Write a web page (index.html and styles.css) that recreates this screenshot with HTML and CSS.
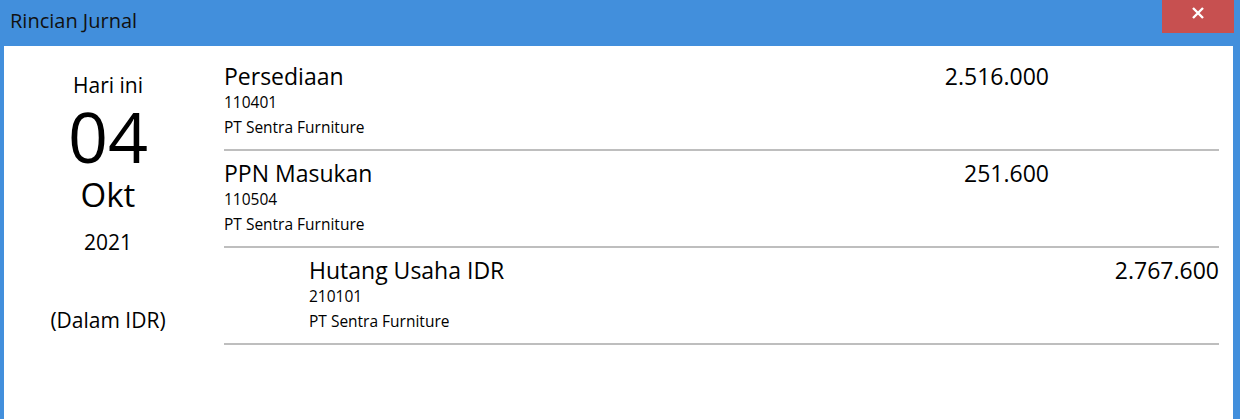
FILE: index.html
```html
<!DOCTYPE html>
<html lang="id">

<head>
    <meta charset="UTF-8">
    <meta name="viewport" content="width=device-width, initial-scale=1.0">
    <title>Rincian Jurnal</title>
    <link rel="stylesheet" href="styles.css">
</head>

<body>
    <div class="window">
        <div class="titlebar">
            <div class="title">Rincian Jurnal</div>
            <button class="close" title="Tutup">
                <svg width="12" height="12" viewBox="0 0 12 12">
                    <path d="M1 1 L11 11 M11 1 L1 11" stroke="#fff" stroke-width="2.4" fill="none" />
                </svg>
            </button>
        </div>

        <div class="content">
            <div class="date">
                <div class="today">Hari ini</div>
                <div class="day">04</div>
                <div class="month">Okt</div>
                <div class="year">2021</div>
                <div class="currency">(Dalam IDR)</div>
            </div>

            <div class="journal">
                <!-- Debit -->
                <div class="entry">
                    <div class="entry-body debit">
                        <div class="account">
                            <div class="name">Persediaan</div>
                            <div class="code">110401</div>
                            <div class="partner">PT Sentra Furniture</div>
                        </div>
                        <div class="amount">2.516.000</div>
                    </div>
                </div>
                <div class="entry">
                    <div class="entry-body debit">
                        <div class="account">
                            <div class="name">PPN Masukan</div>
                            <div class="code">110504</div>
                            <div class="partner">PT Sentra Furniture</div>
                        </div>
                        <div class="amount">251.600</div>
                    </div>
                </div>
                <!-- Kredit -->
                <div class="entry">
                    <div class="entry-body credit">
                        <div class="account">
                            <div class="name">Hutang Usaha IDR</div>
                            <div class="code">210101</div>
                            <div class="partner">PT Sentra Furniture</div>
                        </div>
                        <div class="amount">2.767.600</div>
                    </div>
                </div>
            </div>
        </div>
    </div>
</body>

</html>
```

FILE: styles.css
```css
body {
    margin: 0;
    font-family: "Open Sans", "Noto Sans", sans-serif;
    color: #000;
}

.window {
    height: 100vh;
    display: flex;
    flex-direction: column;
    background-color: #428fdc;
}

.titlebar {
    height: 46px;
    display: flex;
    justify-content: space-between;
    align-items: flex-start;
    padding: 0 6px 0 10px;
}

.title {
    font-size: 20px;
    line-height: 28px;
    padding-top: 7px;
    color: #111;
}

.close {
    width: 72px;
    height: 33px;
    border: none;
    padding: 0 0 8px;
    background-color: #c75050;
    display: flex;
    align-items: center;
    justify-content: center;
    cursor: pointer;
}

.content {
    flex: 1;
    display: flex;
    margin: 0 7px 0 4px;
    background-color: #fff;
}

.date {
    width: 208px;
    padding-top: 25px;
    text-align: center;
}

.today {
    font-size: 21px;
    line-height: 28px;
}

.day {
    font-size: 70px;
    line-height: 74px;
}

.month {
    font-size: 33px;
    line-height: 44px;
}

.year {
    font-size: 21px;
    line-height: 28px;
    margin-top: 11px;
}

.currency {
    font-size: 21px;
    line-height: 28px;
    margin-top: 50px;
}

.journal {
    flex: 1;
    margin: 0 14px 0 12px;
    padding-top: 8px;
}

.entry {
    border-bottom: 2px solid #bebebe;
    padding: 8px 0 9px;
}

.entry-body {
    display: flex;
    justify-content: space-between;
    align-items: flex-start;
}

.entry-body.debit {
    padding-right: 170px;
}

.entry-body.credit {
    padding-left: 85px;
}

.name,
.amount {
    font-size: 23px;
    line-height: 28px;
}

.code,
.partner {
    font-size: 15.5px;
    line-height: 25px;
}
```
